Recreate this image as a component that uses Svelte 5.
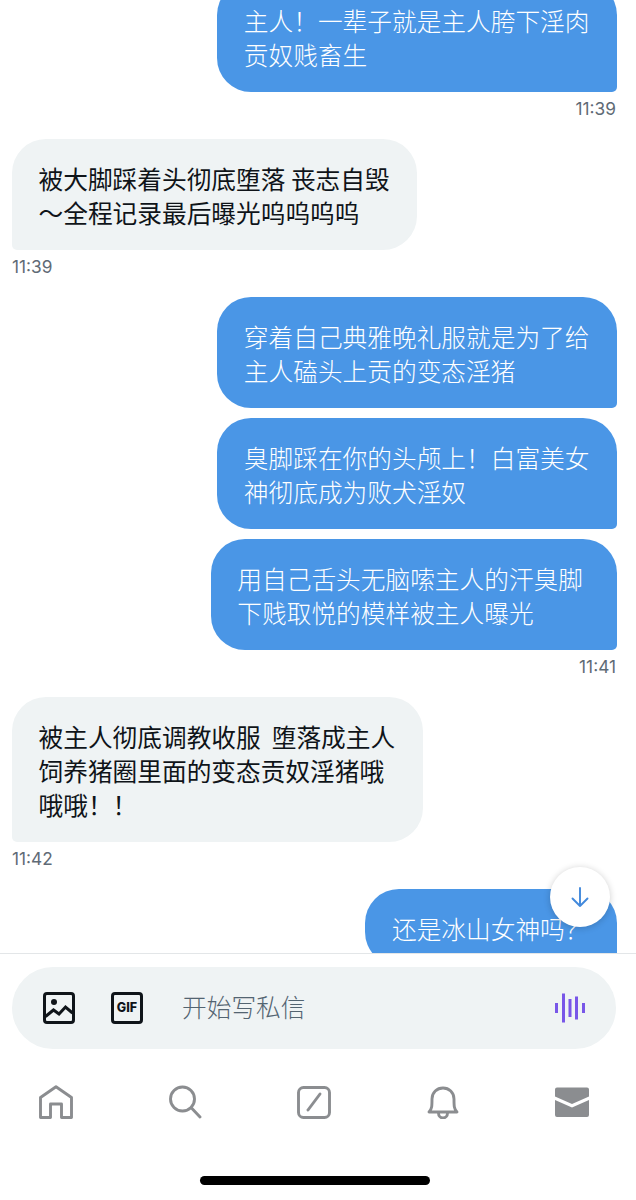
<script>
  const messages = [
    { side: 'sent', lines: ['主人！一辈子就是主人胯下淫肉', '贡奴贱畜生'], time: '11:39' },
    { side: 'received', lines: ['被大脚踩着头彻底堕落 丧志自毁', '～全程记录最后曝光呜呜呜呜'], time: '11:39' },
    { side: 'sent', lines: ['穿着自己典雅晚礼服就是为了给', '主人磕头上贡的变态淫猪'] },
    { side: 'sent', lines: ['臭脚踩在你的头颅上！白富美女', '神彻底成为败犬淫奴'] },
    { side: 'sent', wide: true, lines: ['用自己舌头无脑嗦主人的汗臭脚', '下贱取悦的模样被主人曝光'], time: '11:41' },
    { side: 'received', lines: ['被主人彻底调教收服  堕落成主人', '饲养猪圈里面的变态贡奴淫猪哦', '哦哦！！'], time: '11:42' },
    { side: 'sent', lines: ['还是冰山女神吗？'] }
  ];
</script>

<div class="screen">
  <main class="chat">
    <div class="list">
      {#each messages as m}
        <div class="msg {m.side}" class:timed={m.time} class:wide={m.wide}>
          <div class="bubble">
            {#each m.lines as line}<div class="line">{line}</div>{/each}
          </div>
          {#if m.time}<div class="time">{m.time}</div>{/if}
        </div>
      {/each}
    </div>
    <button class="down" aria-label="scroll down">
      <svg width="20" height="22" viewBox="0 0 20 22" fill="none" stroke="#4289dc" stroke-width="1.900" stroke-linecap="round" stroke-linejoin="round"><path d="M10 2v18M2.500 12.500 10 20l7.500-7.500"/></svg>
    </button>
  </main>

  <section class="composer">
    <div class="pill">
      <svg class="ic" width="32" height="32" viewBox="0 0 32 32" fill="none">
        <rect x="1.500" y="1.500" width="29" height="29" rx="2.500" stroke="#0f1419" stroke-width="3"/>
        <circle cx="11" cy="10" r="3" fill="#0f1419"/>
        <path d="M2.500 24.500l8-6.500 5.500 4 6.500-7 7 6" stroke="#0f1419" stroke-width="3"/>
      </svg>
      <div class="gif"><span>GIF</span></div>
      <span class="placeholder">开始写私信</span>
      <svg class="wave" width="30" height="30" viewBox="0 0 30 30" fill="#7856e8">
        <rect x="0" y="10" width="3" height="10"/><rect x="7" y="0.500" width="3" height="29"/><rect x="13.500" y="6" width="3" height="18"/><rect x="20" y="3.500" width="3" height="23"/><rect x="27" y="10" width="3" height="10"/>
      </svg>
    </div>
  </section>

  <nav class="nav">
    <svg width="34" height="34" viewBox="0 0 34 34" fill="none" stroke="#8b8d90" stroke-width="2.900"><path d="M1.500 32.500V12.500L17 1.800l15.500 10.700v20H22.500V19h-11v13.500z" stroke-linejoin="round"/></svg>
    <svg width="34" height="34" viewBox="0 0 34 34" fill="none" stroke="#8b8d90" stroke-width="2.900" stroke-linecap="round"><circle cx="14.500" cy="14" r="12"/><path d="M23.500 23l8.500 9"/></svg>
    <svg width="34" height="34" viewBox="0 0 34 34" fill="none" stroke="#8b8d90" stroke-width="2.900" stroke-linecap="round"><rect x="1.500" y="2.500" width="31" height="30" rx="5"/><path d="M11 25 23 9"/></svg>
    <svg width="34" height="34" viewBox="0 0 34 34" fill="none" stroke="#8b8d90" stroke-width="2.900" stroke-linejoin="round"><path d="M3 27c3-3 3-6 3-13C6 7.500 11 3 17 3s11 4.500 11 11c0 7 0 10 3 13z"/><path d="M12.500 28c0 3 2 5 4.500 5s4.500-2 4.500-5"/></svg>
    <svg width="34" height="34" viewBox="0 0 34 34" fill="#8b8d90"><path d="M0 4.500a2 2 0 0 1 2-2h30a2 2 0 0 1 2 2v7l-17 7.500-17-7.500z"/><path d="M0 15l17 7.500L34 15v15a2 2 0 0 1-2 2H2a2 2 0 0 1-2-2z"/></svg>
  </nav>

  <div class="home"></div>
</div>

<style>
  :global(body) { margin: 0; background: #fff; }
  .screen {
    width: 636px; height: 1200px; display: flex; flex-direction: column;
    overflow: hidden; background: #fff;
    font-family: "Noto Sans CJK SC", "Noto Sans", sans-serif;
  }
  .chat { position: relative; height: 953px; flex: none; overflow: hidden; }
  .list { display: flex; flex-direction: column; margin-top: -19px; padding: 0 19px 0 12px; }
  .msg { display: flex; flex-direction: column; margin-bottom: 10px; }
  .msg.timed { margin-bottom: 18px; }
  .msg.sent { align-items: flex-end; }
  .msg.received { align-items: flex-start; }
  .bubble {
    box-sizing: border-box; padding: 21.500px 27.500px 21.500px 26.500px; font-size: 24.700px; line-height: 34px;
    border-radius: 34px; white-space: pre;
  }
  .sent .bubble { background: #4a96e6; color: #fff; border-bottom-right-radius: 5px; font-weight: 300; }
  .wide .bubble { padding-right: 34px; }
  .received .bubble { background: #eff3f4; color: #0f1419; border-bottom-left-radius: 5px; font-weight: 400; }
  .time { font-family: Inter, "Noto Sans", sans-serif; font-size: 17.300px; line-height: 24px; color: #5f6b76; margin-top: 5px; margin-right: 1px; }
  .down {
    position: absolute; right: 26px; top: 867px; width: 60px; height: 60px; border: none; padding: 0;
    border-radius: 50%; background: #fff; box-shadow: 0 1px 7px rgba(0,0,0,.2);
    display: flex; align-items: center; justify-content: center;
  }
  .composer { border-top: 1px solid #e3e6e8; padding: 13px 20px 0 12px; flex: none; }
  .pill {
    height: 82px; border-radius: 41px; background: #eff3f4; display: flex; align-items: center;
    padding: 0 31px;
  }
  .ic { flex: none; }
  .gif {
    box-sizing: border-box; width: 32px; height: 32px; margin-left: 36px; border: 3px solid #0f1419; border-radius: 4px;
    display: flex; align-items: center; justify-content: center;
  }
  .gif span { font: 800 12.500px/1 Inter, sans-serif; color: #0f1419; }
  .placeholder { margin-left: 39px; font-size: 24.700px; line-height: 34px; font-weight: 300; color: #536471; flex: 1; position: relative; top: -2px; }
  .wave { flex: none; }
  .nav {
    display: flex; justify-content: space-between; align-items: center; flex: none;
    padding: 0 47px 0 39px; margin-top: 36px; height: 34px;
  }
  .home { width: 230px; height: 9px; border-radius: 5px; background: #000; margin: 57px 0 0 200px; flex: none; }
</style>
